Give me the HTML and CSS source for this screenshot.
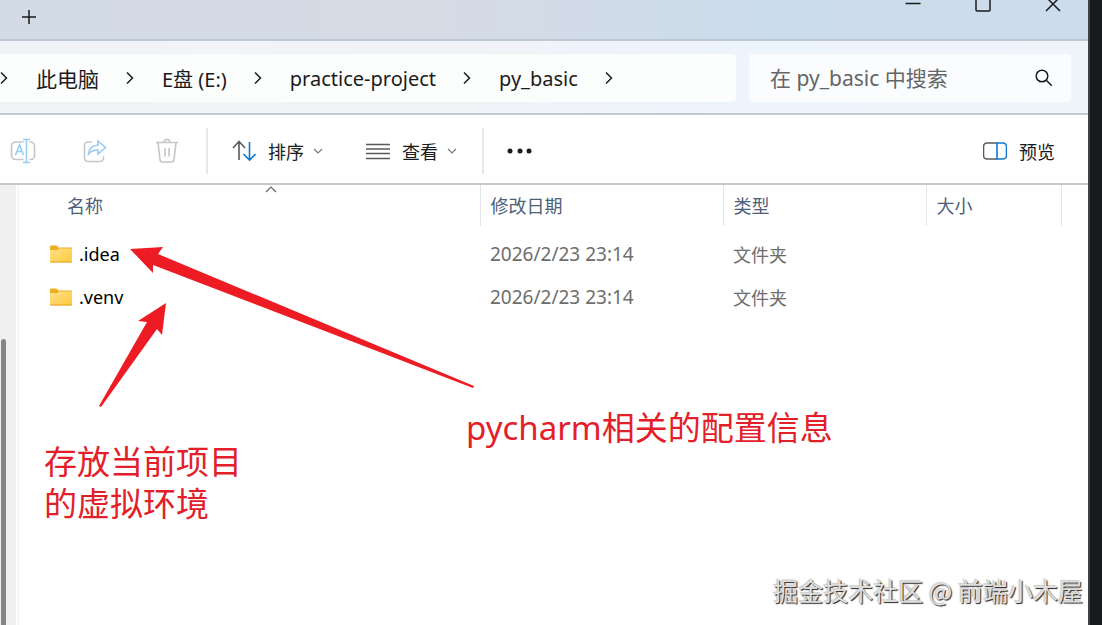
FILE: index.html
```html
<!DOCTYPE html>
<html lang="zh-CN">
<head>
    <meta charset="UTF-8">
    <meta name="viewport" content="width=device-width, initial-scale=1.0">
    <title>py_basic</title>
    <link rel="stylesheet" href="styles.css">
</head>
<body>
    <div class="window">
        <header class="title-bar">
            <button class="new-tab" aria-label="新建标签页">
                <svg width="16" height="16" viewBox="0 0 16 16"><path d="M8 1v14M1 8h14"/></svg>
            </button>
            <div class="window-buttons">
                <button aria-label="最小化">
                    <svg width="16" height="16" viewBox="0 0 16 16"><path d="M0.500 7.500h15"/></svg>
                </button>
                <button aria-label="最大化">
                    <svg width="16" height="16" viewBox="0 0 16 16"><rect x="1" y="1" width="14" height="14" rx="1"/></svg>
                </button>
                <button aria-label="关闭">
                    <svg width="16" height="16" viewBox="0 0 16 16"><path d="M1 1l14 14M15 1L1 15"/></svg>
                </button>
            </div>
        </header>

        <div class="address-bar">
            <nav class="crumbs">
                <svg width="8" height="14" viewBox="0 0 8 14"><path d="M1 1.500l5.500 5.500L1 12.500"/></svg>
                <a href="#" class="root">此电脑</a>
                <svg width="8" height="14" viewBox="0 0 8 14"><path d="M1 1.500l5.500 5.500L1 12.500"/></svg>
                <a href="#">E盘 (E:)</a>
                <svg width="8" height="14" viewBox="0 0 8 14"><path d="M1 1.500l5.500 5.500L1 12.500"/></svg>
                <a href="#">practice-project</a>
                <svg width="8" height="14" viewBox="0 0 8 14"><path d="M1 1.500l5.500 5.500L1 12.500"/></svg>
                <a href="#">py_basic</a>
                <svg width="8" height="14" viewBox="0 0 8 14"><path d="M1 1.500l5.500 5.500L1 12.500"/></svg>
            </nav>
            <form class="search">
                <input type="text" placeholder="在 py_basic 中搜索" aria-label="在 py_basic 中搜索">
                <button type="button" aria-label="搜索">
                    <svg width="18" height="18" viewBox="0 0 18 18"><circle cx="7" cy="7" r="5.800"/><path d="M11.300 11.300l5.500 5.500"/></svg>
                </button>
            </form>
        </div>

        <div class="toolbar">
            <div class="file-actions">
                <button aria-label="重命名" disabled>
                    <svg width="26" height="26" viewBox="0 0 26 26">
                        <path class="gray" d="M13.500 4H5.500a4 4 0 0 0-4 4v9.500a4 4 0 0 0 4 4h8M19.500 4h1a4 4 0 0 1 4 4v9.500a4 4 0 0 1-4 4h-1"/>
                        <path class="sky" d="M5.500 17l4-10 4 10M7 13.500h5M16.500 1.500v23M13 1.500h7M13 24.500h7"/>
                    </svg>
                </button>
                <button aria-label="共享" disabled>
                    <svg width="26" height="26" viewBox="0 0 26 26">
                        <path class="gray" d="M10 4H6a3.500 3.500 0 0 0-3.500 3.500v12.500a3.500 3.500 0 0 0 3.500 3.500h12a3.500 3.500 0 0 0 3.500-3.500v-2"/>
                        <path class="sky" d="M16 3l7.500 6.500L16 16v-4c-4 0-7 1-9.500 4C7 11 10 7.500 16 7z"/>
                    </svg>
                </button>
                <button aria-label="删除" disabled>
                    <svg width="26" height="26" viewBox="0 0 26 26">
                        <path class="gray" d="M2 4.500h22M10 4.500a3 3 0 0 1 6 0M4 4.500l2 17a2.500 2.500 0 0 0 2.500 2.500h9a2.500 2.500 0 0 0 2.500-2.500l2-17M11 10v8.500M15 10v8.500"/>
                    </svg>
                </button>
            </div>
            <div class="view-actions">
                <button>
                    <svg width="24" height="22" viewBox="0 0 24 22">
                        <path class="dark" d="M7 20V2M1 8l6-6.500L13 8"/>
                        <path class="blue" d="M17.500 2v18M11.500 14l6 6 6-6"/>
                    </svg>
                    <span>排序</span>
                    <svg class="chevron" width="10" height="6" viewBox="0 0 10 6"><path d="M1 1l4 4 4-4"/></svg>
                </button>
                <button>
                    <svg width="24" height="18" viewBox="0 0 24 18"><path class="dark" d="M0 2.500h24M0 7h24M0 11.500h24M0 16.500h24"/></svg>
                    <span>查看</span>
                    <svg class="chevron" width="10" height="6" viewBox="0 0 10 6"><path d="M1 1l4 4 4-4"/></svg>
                </button>
            </div>
            <button class="more" aria-label="更多">
                <svg width="26" height="6" viewBox="0 0 26 6"><circle cx="3" cy="3" r="2.500"/><circle cx="13" cy="3" r="2.500"/><circle cx="22" cy="3" r="2.500"/></svg>
            </button>
            <button class="preview">
                <svg width="24" height="18" viewBox="0 0 24 18">
                    <path class="dark" d="M14 1H4a3.500 3.500 0 0 0-3.500 3.500v9A3.500 3.500 0 0 0 4 17h10"/>
                    <path class="blue" d="M14 1h6a3.500 3.500 0 0 1 3.500 3.500v9A3.500 3.500 0 0 1 20 17h-6z"/>
                </svg>
                <span>预览</span>
            </button>
        </div>

        <div class="content">
            <aside class="sidebar"><div class="scroll-thumb"></div></aside>
            <main class="files">
                <table>
                    <colgroup>
                        <col class="col-name">
                        <col class="col-date">
                        <col class="col-type">
                        <col class="col-size">
                        <col>
                    </colgroup>
                    <thead>
                        <tr>
                            <th>
                                名称
                                <svg class="sort-mark" width="12" height="8" viewBox="0 0 12 8"><path d="M1 7l5-5 5 5"/></svg>
                            </th>
                            <th>修改日期</th>
                            <th>类型</th>
                            <th>大小</th>
                            <td></td>
                        </tr>
                    </thead>
                    <tbody>
                        <tr>
                            <td>
                                <div class="file-name">
                                    <svg width="22" height="18" viewBox="0 0 22 18">
                                        <defs>
                                            <linearGradient id="folder" x1="0" y1="0" x2="1" y2="1">
                                                <stop offset="0" stop-color="#ffe08a"/>
                                                <stop offset="1" stop-color="#fec93c"/>
                                            </linearGradient>
                                        </defs>
                                        <path fill="#eab020" d="M0 1.500Q0 0.500 1 0.500h5.500l2 2H21q1 0 1 1V8H0z"/>
                                        <path fill="url(#folder)" d="M0 5h7.500L9 3.500h13V16.500q0 1-1 1H1q-1 0-1-1z"/>
                                        <path fill="#dda52b" d="M0 16.500h22q0 1-1 1H1q-1 0-1-1z"/>
                                    </svg>
                                    <span>.idea</span>
                                </div>
                            </td>
                            <td class="date">2026/2/23 23:14</td>
                            <td>文件夹</td>
                            <td></td>
                            <td></td>
                        </tr>
                        <tr>
                            <td>
                                <div class="file-name">
                                    <svg width="22" height="18" viewBox="0 0 22 18">
                                        <path fill="#eab020" d="M0 1.500Q0 0.500 1 0.500h5.500l2 2H21q1 0 1 1V8H0z"/>
                                        <path fill="url(#folder)" d="M0 5h7.500L9 3.500h13V16.500q0 1-1 1H1q-1 0-1-1z"/>
                                        <path fill="#dda52b" d="M0 16.500h22q0 1-1 1H1q-1 0-1-1z"/>
                                    </svg>
                                    <span>.venv</span>
                                </div>
                            </td>
                            <td class="date">2026/2/23 23:14</td>
                            <td>文件夹</td>
                            <td></td>
                            <td></td>
                        </tr>
                    </tbody>
                </table>
            </main>

            <!-- notes drawn over the file list -->
            <svg class="pointers" width="480" height="230" viewBox="0 0 480 230">
                <path d="M130 64l33-2-5 7L474 201l-1 2L153 80v8z"/>
                <path d="M166 118l-4 32-5-6-56 78-2-1 48-84-9-1z"/>
            </svg>
            <p class="note note-venv">存放当前项目<br>的虚拟环境</p>
            <p class="note note-idea">pycharm相关的配置信息</p>
            <p class="watermark">掘金技术社区 @ 前端小木屋</p>
        </div>
    </div>
</body>
</html>
```

FILE: styles.css
```css
* {
    box-sizing: border-box;
}
body {
    margin: 0;
    background-color: #17191b;
    color: #1b1b1b;
    font-family: "Noto Sans", "Noto Sans CJK SC", sans-serif;
    font-size: 18px;
}
button {
    display: flex;
    align-items: center;
    padding: 0;
    border: none;
    background: none;
    color: inherit;
    font: inherit;
}
svg {
    display: block;
    flex: none;
    fill: none;
    stroke: #1b1b1b;
    stroke-width: 1.5;
}
.window {
    display: flex;
    flex-direction: column;
    min-height: 100vh;
    margin-right: 12px;
    border-right: 2px solid #3c4144;
    background-color: #fff;
}

/* title bar */
.title-bar {
    display: flex;
    justify-content: space-between;
    height: 41px;
    padding: 0 27px 0 21px;
    border-bottom: 2px solid #bcc8d3;
    background: linear-gradient(to right, #d3dbe6, #d6dbe5 40%, #cbdceb 70%, #cddcec);
    overflow: hidden;
}
.new-tab {
    height: 34px;
}
.window-buttons {
    display: flex;
    gap: 54px;
    height: 8px;
}

/* address bar */
.address-bar {
    display: flex;
    gap: 13px;
    padding: 13px 17px 11px 0;
    border-bottom: 2px solid #c1cad1;
    background: linear-gradient(to right, #f1f4f6, #f2f3f7 40%, #eef4fc 66%, #eff4f9);
    font-size: 20px;
}
.crumbs {
    display: flex;
    flex: 1;
    align-items: center;
    height: 48px;
    border-radius: 0 4px 4px 0;
    background-color: #fcfdfd;
}
.crumbs a {
    margin: 0 27px 0 28px;
    color: #1b1b1b;
    text-decoration: none;
    white-space: nowrap;
}
.crumbs .root {
    font-size: 21px;
}
.search {
    display: flex;
    flex: 0 0 322px;
    align-items: center;
    min-width: 0;
    height: 48px;
    padding: 0 18px 0 21px;
    border-radius: 4px;
    background-color: #fafcfe;
    font-size: 21px;
}
.search input {
    flex: 1;
    width: 100%;
    min-width: 0;
    padding: 0;
    border: none;
    outline: none;
    background: none;
    font: inherit;
}
.search input::placeholder {
    color: #636567;
    opacity: 1;
}

/* toolbar */
.toolbar {
    display: flex;
    align-items: center;
    height: 70px;
    padding: 3px 33px 0 0;
    border-bottom: 2px solid #c6c9c9;
}
.toolbar svg {
    stroke-width: 1.6;
}
.file-actions,
.view-actions {
    display: flex;
    align-items: center;
    height: 46px;
    border-right: 2px solid #e8e8e8;
}
.file-actions {
    gap: 26px;
    padding-right: 16px;
}
.file-actions button {
    justify-content: center;
    width: 46px;
}
.view-actions {
    gap: 43px;
    padding: 0 25px 0 24px;
}
.view-actions button,
.preview {
    gap: 12px;
}
.toolbar .gray {
    stroke: #c6c6c6;
}
.toolbar .sky {
    stroke: #9acbf0;
}
.toolbar .dark {
    stroke: #5a5a5a;
}
.toolbar .blue {
    stroke: #0f7ad0;
}
.toolbar .chevron {
    margin-left: -3px;
    stroke: #777;
    stroke-width: 1.2;
}
.more {
    margin-left: 23px;
}
.more svg {
    fill: #1b1b1b;
    stroke: none;
}
.preview {
    margin-left: auto;
}

/* file list */
.content {
    display: flex;
    flex: 1;
    position: relative;
}
.sidebar {
    width: 19px;
    padding: 154px 0 0 1px;
    border-right: 1px solid #f0f0f0;
    background: linear-gradient(to right, #f0f0f0 16px, #fff 16px);
    display: flex;
}
.scroll-thumb {
    width: 5px;
    border-radius: 3px 3px 0 0;
    background-color: #858585;
}
.files {
    flex: 1;
    padding-left: 31px;
}
table {
    width: 100%;
    border-collapse: collapse;
    table-layout: fixed;
}
.col-name {
    width: 430px;
}
.col-date {
    width: 243px;
}
.col-type {
    width: 203px;
}
.col-size {
    width: 135px;
}
th,
td {
    padding: 0 0 0 10px;
    text-align: left;
    font-weight: normal;
}
th {
    position: relative;
    height: 41px;
    padding-bottom: 2px;
    border-right: 1px solid #e3e5e7;
    color: #4c607a;
}
th:first-child {
    padding-left: 17px;
}
tbody tr {
    height: 43px;
}
tbody td {
    color: #6d6d6d;
}
tbody tr:first-child td {
    height: 49px;
    padding-top: 6px;
}
tbody td:first-child {
    padding-left: 0;
    color: #000;
}
.date {
    font-size: 19px;
}
.sort-mark {
    position: absolute;
    top: 0;
    left: 50%;
    stroke: #666;
    stroke-width: 1.2;
}
.file-name {
    display: flex;
    align-items: center;
    gap: 7px;
}
.file-name svg {
    stroke: none;
}

/* notes */
.pointers {
    position: absolute;
    top: 0;
    left: 0;
    fill: #ed1c24;
    stroke: none;
}
.note {
    position: absolute;
    margin: 0;
    color: #e3202a;
    font-size: 33px;
    line-height: 42px;
}
.note-venv {
    top: 256px;
    left: 44px;
}
.note-idea {
    top: 222px;
    left: 466px;
}
.watermark {
    position: absolute;
    right: 5px;
    bottom: 17px;
    margin: 0;
    color: #dedede;
    font-family: "Noto Sans CJK SC", sans-serif;
    font-size: 25px;
    line-height: 36px;
    text-shadow: 1px 1px 1px #222, -1px -1px 1px #ccc;
}
```
